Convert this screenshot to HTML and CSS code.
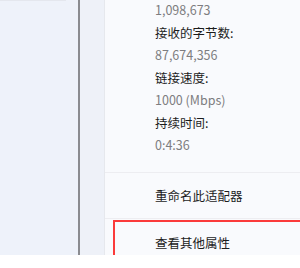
FILE: index.html
```html
<!DOCTYPE html>
<html lang="zh-CN">
<head>
<meta charset="utf-8">
<link rel="stylesheet" href="styles.css">
</head>
<body>
<div class="window">
  <div class="left"><div class="topline"></div></div>
  <div class="divider"></div>
  <div class="mid"></div>
  <div class="panel">
    <div class="stats">
      <div class="value">1,098,673</div>
      <div class="label">接收的字节数:</div>
      <div class="value">87,674,356</div>
      <div class="label">链接速度:</div>
      <div class="value">1000 (Mbps)</div>
      <div class="label">持续时间:</div>
      <div class="value">0:4:36</div>
    </div>
    <div class="item">重命名此适配器</div>
    <div class="item highlighted">查看其他属性</div>
  </div>
</div>
</body>
</html>
```
FILE: styles.css
```css
html, body {
  margin: 0;
  padding: 0;
  background: #ffffff;
}
body {
  width: 300px;
  height: 268px;
  overflow: hidden;
  font-family: "Noto Sans CJK SC", "Noto Sans", sans-serif;
  font-size: 12.5px;
}
.window {
  display: flex;
  height: 255px;
  overflow: hidden;
}
.left {
  width: 78px;
  background: #eef2fa;
}
.topline {
  width: 66px;
  height: 1px;
  background: #e4e7ee;
}
.divider {
  width: 2px;
  background: #8a8b90;
}
.mid {
  width: 24px;
  background: #eef1f8;
}
.panel {
  flex: 1;
  background: #f9fafd;
  border-left: 1px solid #e6e8ed;
  display: flex;
  flex-direction: column;
}
.stats {
  padding: 0 0 15px 50px;
  margin-top: -1px;
  border-bottom: 1px solid #ededf1;
}
.value, .label {
  line-height: 22.5px;
  white-space: nowrap;
}
.value {
  color: #7d7d80;
}
.label {
  color: #1c1c1c;
}
.item {
  color: #1c1c1c;
  line-height: 45px;
  padding-left: 50px;
  white-space: nowrap;
}
.item:first-of-type {
  border-bottom: 1px solid #ededf1;
}
.stats + .item {
  border-bottom: 1px solid #ededf1;
}
.highlighted {
  margin: 1px 0 0 8px;
  padding-left: 40px;
  border: 2px solid #fb3a3a;
  border-right: none;
  line-height: 42px;
}
```
